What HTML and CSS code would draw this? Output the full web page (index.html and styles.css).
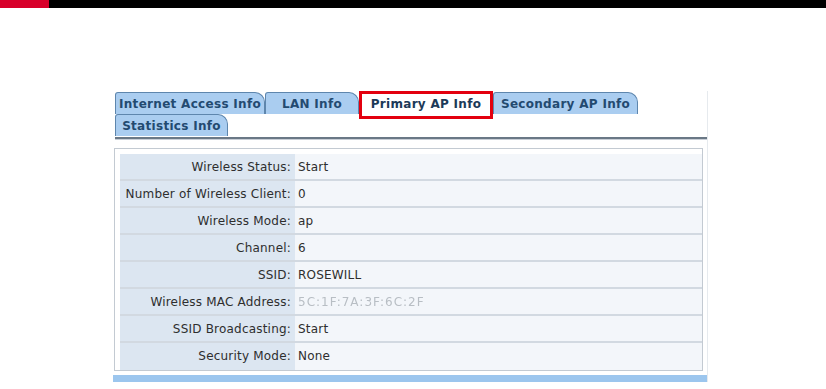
FILE: index.html
```html
<!DOCTYPE html>
<html>
<head>
<meta charset="utf-8">
<link rel="stylesheet" href="styles.css">
</head>
<body>
<div class="topbar"><div class="topbar-red"></div><div class="topbar-black"></div></div>
<div class="panel">
  <div class="tabs">
    <div class="tab-row">
      <div class="tab tab-internet">Internet Access Info</div>
      <div class="tab tab-lan">LAN Info</div>
      <div class="tab tab-active">Primary AP Info</div>
      <div class="tab tab-secondary">Secondary AP Info</div>
    </div>
    <div class="tab-row">
      <div class="tab tab-stats">Statistics Info</div>
    </div>
  </div>
  <div class="tab-line"></div>
  <div class="info-table">
    <div class="label">Wireless Status:</div><div class="value">Start</div>
    <div class="label">Number of Wireless Client:</div><div class="value">0</div>
    <div class="label">Wireless Mode:</div><div class="value">ap</div>
    <div class="label">Channel:</div><div class="value">6</div>
    <div class="label">SSID:</div><div class="value">ROSEWILL</div>
    <div class="label">Wireless MAC Address:</div><div class="value mac">5C:1F:7A:3F:6C:2F</div>
    <div class="label">SSID Broadcasting:</div><div class="value">Start</div>
    <div class="label last">Security Mode:</div><div class="value last">None</div>
  </div>
  <div class="bottom-bar"></div>
</div>
</body>
</html>
```
FILE: styles.css
```css
html, body {
  margin: 0;
  padding: 0;
  background: #ffffff;
}
body {
  width: 826px;
  height: 389px;
  overflow: hidden;
  font-family: "DejaVu Sans", Verdana, sans-serif;
}
.topbar {
  display: flex;
  height: 8px;
}
.topbar-red {
  width: 49px;
  background: #d8002a;
}
.topbar-black {
  flex: 1;
  background: #000000;
}
.panel {
  margin: 83px 0 0 113px;
  width: 594px;
  border-right: 1px solid #e6eaee;
  padding-top: 1px;
}
.tabs {
  padding-left: 2px;
}
.tab-row {
  display: flex;
  align-items: flex-start;
  height: 22px;
}
.tab {
  box-sizing: border-box;
  height: 22px;
  background: #aacdf0;
  border: 1px solid #5e86ad;
  border-bottom: none;
  border-radius: 3px 10px 0 0;
  color: #234a70;
  font-weight: bold;
  font-size: 12px;
  letter-spacing: 0.3px;
  line-height: 20px;
  padding: 1px 0 0 0;
  text-align: center;
  white-space: nowrap;
}
.tab-internet { width: 150px; }
.tab-lan { width: 94px; }
.tab-secondary { width: 145px; }
.tab-stats { width: 113px; }
.tab-active {
  width: 134px;
  height: 28px;
  margin-top: -1px;
  background: #ffffff;
  border: 3px solid #e3000f;
  border-radius: 0;
  color: #1c3a58;
  line-height: 18px;
  padding-top: 1px;
  position: relative;
  z-index: 1;
}
.tab-line {
  margin-left: 2px;
  margin-top: 1px;
  height: 2px;
  background: #6a7886;
  border-bottom: 1px solid #c8ced6;
}
.info-table {
  box-sizing: border-box;
  margin: 8px 0 0 1px;
  width: 589px;
  border: 1px solid #c3cad2;
  padding: 5px 0 0 5px;
  display: grid;
  grid-template-columns: 175px 1fr;
  font-size: 12px;
  letter-spacing: 0.2px;
  color: #2e2e2e;
}
.label, .value {
  height: 27px;
  box-sizing: border-box;
  border-bottom: 2px solid #d2d9e1;
  padding-top: 1px;
  line-height: 25px;
  white-space: nowrap;
}
.label {
  background: #dce6f1;
  text-align: right;
  padding-right: 4px;
}
.value {
  background: #f3f6fa;
  padding-left: 3px;
}
.label.last, .value.last {
  border-bottom: none;
}
.mac {
  color: #b8bec4;
  letter-spacing: 1px;
  filter: blur(0.6px);
}
.bottom-bar {
  margin-top: 4px;
  height: 7px;
  background: #9cc6ee;
}
```
